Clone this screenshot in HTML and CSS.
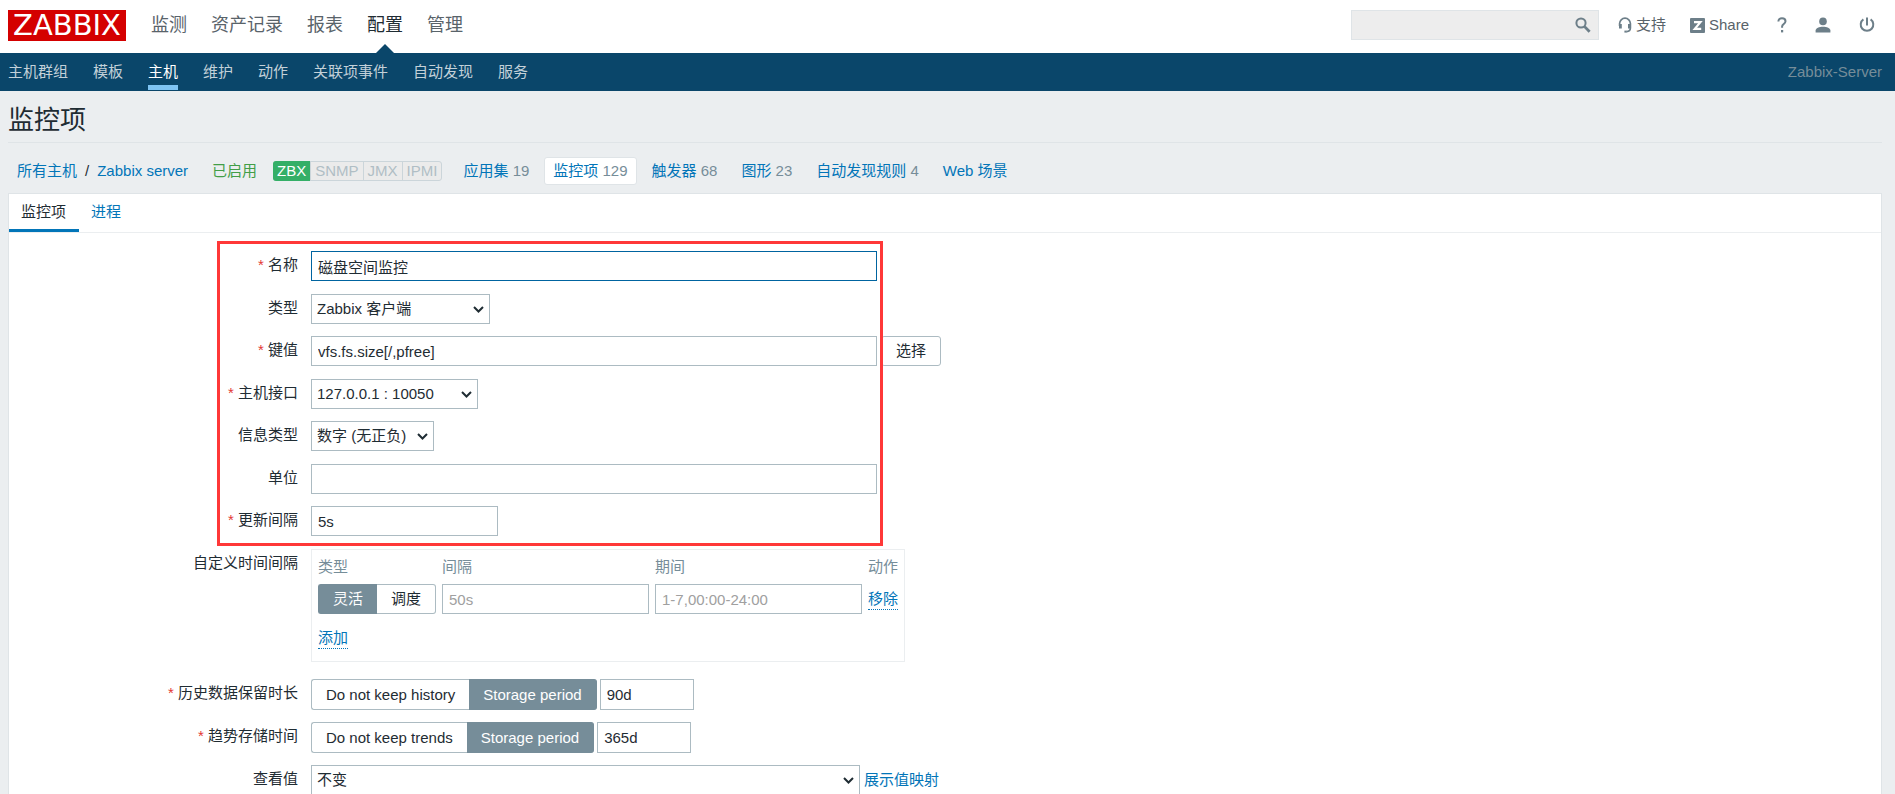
FILE: index.html
```html
<!DOCTYPE html>
<html lang="zh-CN">
<head>
<meta charset="utf-8">
<title>监控项</title>
<link rel="stylesheet" href="styles.css">
</head>
<body>
<header class="top">
  <a class="logo" href="#">ZABBIX</a>
  <nav class="main-nav">
    <a href="#">监测</a>
    <a href="#">资产记录</a>
    <a href="#">报表</a>
    <a href="#" class="current">配置</a>
    <a href="#">管理</a>
  </nav>
  <form class="search">
    <input type="text" aria-label="搜索">
    <button type="button" aria-label="搜索"><svg width="16" height="16" viewBox="0 0 16 16" fill="none" stroke="currentColor"><circle cx="6" cy="6" r="4.6" stroke-width="2"/><path d="M9.6 9.6 14.6 14.8" stroke-width="2.8"/></svg></button>
  </form>
  <a class="tool support" href="#"><svg width="14" height="16" viewBox="0 0 14 16" fill="none" stroke="currentColor"><path d="M1.6 9V6.6a5.4 5.4 0 0 1 10.8 0V11q0 3.4-3.8 3.6" stroke-width="1.7"/><path d="M2.4 7v4.4M11.4 7v4.4" stroke-width="2.8"/><path d="M6.4 14.6h2.4" stroke-width="2"/></svg>支持</a>
  <a class="tool share" href="#"><svg width="15" height="15" viewBox="0 0 15 15"><rect width="15" height="15" rx="1" fill="currentColor"/><path d="M4 4.2h6.4L4.8 10.9h6.4" fill="none" stroke="#fff" stroke-width="2.2"/></svg>Share</a>
  <a class="tool icon help" href="#" aria-label="帮助"><svg width="10" height="16" viewBox="0 0 10 16" fill="none" stroke="currentColor"><path d="M1.4 4.6C1.4 2.4 2.9 1.3 5 1.3s3.5 1.1 3.5 3c0 2.6-3.4 2.8-3.4 5.2v1.2" stroke-width="2"/><path d="M4 13h2.2v2.4H4z" fill="currentColor" stroke="none"/></svg></a>
  <a class="tool icon user" href="#" aria-label="用户"><svg width="16" height="16" viewBox="0 0 16 16" fill="currentColor"><circle cx="8" cy="4.4" r="3.8"/><path d="M.6 15.4v-1.8c0-2.5 3.6-3.8 7.4-3.8s7.4 1.3 7.4 3.8v1.8z"/></svg></a>
  <a class="tool icon power" href="#" aria-label="退出"><svg width="16" height="16" viewBox="0 0 16 16" fill="none" stroke="currentColor" stroke-width="2"><path d="M8 .6v8M4.4 2.4a6.3 6.3 0 1 0 7.2 0"/></svg></a>
</header>
<nav class="sub-nav">
  <a href="#">主机群组</a>
  <a href="#">模板</a>
  <a href="#" class="current">主机</a>
  <a href="#">维护</a>
  <a href="#">动作</a>
  <a href="#">关联项事件</a>
  <a href="#">自动发现</a>
  <a href="#">服务</a>
  <span class="server">Zabbix-Server</span>
</nav>
<main>
  <h1>监控项</h1>
  <div class="crumbs">
    <span class="path"><a href="#">所有主机</a><span>/</span><a href="#">Zabbix server</a></span>
    <span class="enabled">已启用</span>
    <span class="agents"><span class="on">ZBX</span><span>SNMP</span><span>JMX</span><span>IPMI</span></span>
    <div class="links">
      <span><a href="#">应用集</a> 19</span>
      <span class="selected"><a href="#">监控项</a> 129</span>
      <span><a href="#">触发器</a> 68</span>
      <span><a href="#">图形</a> 23</span>
      <span><a href="#">自动发现规则</a> 4</span>
      <span><a href="#">Web 场景</a></span>
    </div>
  </div>
  <section class="panel">
    <div class="tabs">
      <a href="#" class="current">监控项</a>
      <a href="#">进程</a>
    </div>
    <form class="item-form">
      <div class="highlight"></div>
      <div class="row">
        <label class="required" for="name">名称</label>
        <div class="field"><input class="wide focused" id="name" type="text" value="磁盘空间监控"></div>
      </div>
      <div class="row">
        <label for="type">类型</label>
        <div class="field"><select class="type" id="type"><option>Zabbix 客户端</option></select></div>
      </div>
      <div class="row">
        <label class="required" for="key">键值</label>
        <div class="field spaced"><input class="wide" id="key" type="text" value="vfs.fs.size[/,pfree]"><button class="btn" type="button">选择</button></div>
      </div>
      <div class="row">
        <label class="required" for="iface">主机接口</label>
        <div class="field"><select class="iface" id="iface"><option>127.0.0.1 : 10050</option></select></div>
      </div>
      <div class="row">
        <label for="info">信息类型</label>
        <div class="field"><select class="info" id="info"><option>数字 (无正负)</option></select></div>
      </div>
      <div class="row">
        <label for="units">单位</label>
        <div class="field"><input class="wide" id="units" type="text"></div>
      </div>
      <div class="row">
        <label class="required" for="delay">更新间隔</label>
        <div class="field"><input class="delay" id="delay" type="text" value="5s"></div>
      </div>
      <div class="row intervals-row">
        <label for="interval">自定义时间间隔</label>
        <div class="intervals">
          <table>
            <thead><tr><th>类型</th><th>间隔</th><th>期间</th><th>动作</th></tr></thead>
            <tbody>
              <tr>
                <td><div class="segments"><button type="button" class="on">灵活</button><button type="button">调度</button></div></td>
                <td><input class="cell" id="interval" type="text" placeholder="50s"></td>
                <td><input class="cell" type="text" placeholder="1-7,00:00-24:00" aria-label="期间"></td>
                <td><a class="dotted" href="#">移除</a></td>
              </tr>
              <tr><td colspan="4" class="add"><a class="dotted" href="#">添加</a></td></tr>
            </tbody>
          </table>
        </div>
      </div>
      <div class="row tall">
        <label class="required" for="history">历史数据保留时长</label>
        <div class="field"><div class="segments"><button type="button">Do not keep history</button><button type="button" class="on">Storage period</button></div><input class="period" id="history" type="text" value="90d"></div>
      </div>
      <div class="row tall">
        <label class="required" for="trends">趋势存储时间</label>
        <div class="field"><div class="segments"><button type="button">Do not keep trends</button><button type="button" class="on">Storage period</button></div><input class="period" id="trends" type="text" value="365d"></div>
      </div>
      <div class="row">
        <label for="valuemap">查看值</label>
        <div class="field spaced"><select class="valuemap" id="valuemap"><option>不变</option></select><a href="#">展示值映射</a></div>
      </div>
    </form>
  </section>
</main>
</body>
</html>
```

FILE: styles.css
```css
* {
  box-sizing: border-box;
}

body {
  margin: 0;
  height: 100vh;
  overflow: hidden;
  display: flex;
  flex-direction: column;
  background: #ebeef0;
  color: #1f2c33;
  font: 15px/20px "Liberation Sans", Arial, "Noto Sans CJK SC", sans-serif;
}

a {
  color: #0275b8;
  text-decoration: none;
}

input,
select,
button {
  margin: 0;
  font: inherit;
  color: inherit;
}

svg {
  display: block;
}

/* Header */
.top {
  flex: none;
  display: flex;
  align-items: center;
  height: 53px;
  padding: 0 20px 3px 8px;
  background: #fff;
}

.logo {
  width: 118px;
  height: 31px;
  background: #d40000;
  color: #fff;
  font: 29px/31px "DejaVu Sans", sans-serif;
  text-align: center;
}

.main-nav {
  display: flex;
  align-self: stretch;
  gap: 24px;
  margin-left: 25px;
  margin-right: auto;
}

.main-nav a {
  position: relative;
  padding-top: 13px;
  color: #59636a;
  font-size: 18px;
  line-height: 24px;
}

.main-nav .current {
  color: #1f2c33;
}

.main-nav .current::after {
  content: "";
  position: absolute;
  left: 50%;
  bottom: -3px;
  margin-left: -9px;
  border: 9px solid transparent;
  border-top: 0;
  border-bottom-color: #0a466a;
}

.search {
  display: flex;
  width: 248px;
  height: 30px;
  border: 1px solid #dfe4e7;
  background: #ededed;
}

.search input {
  flex: 1;
  min-width: 0;
  border: 0;
  padding: 0 6px;
  background: none;
}

.search button {
  border: 0;
  padding: 0 7px;
  background: none;
  color: #6d7f89;
}

.tool {
  display: flex;
  align-items: center;
  gap: 4px;
  color: #59636a;
}

.tool svg {
  color: #6d7f89;
}

.support {
  margin-left: 19px;
}

.share {
  margin-left: 24px;
}

.icon {
  margin-left: 28px;
}

.sub-nav {
  flex: none;
  display: flex;
  gap: 25px;
  height: 38px;
  padding: 0 13px 0 8px;
  background: #0a466a;
}

.sub-nav a {
  height: 37px;
  padding-top: 9px;
  border-bottom: 5px solid transparent;
  color: #c3d1d9;
}

.sub-nav .current {
  border-color: #7ec4f3;
  color: #fff;
}

.server {
  margin-left: auto;
  padding-top: 9px;
  color: #768d99;
}

/* Title and breadcrumbs */
main {
  flex: 1;
  min-height: 0;
  display: flex;
  flex-direction: column;
  padding: 0 13px 0 8px;
}

h1 {
  margin: 0;
  padding: 13px 0 6px;
  border-bottom: 1px solid #dfe4e7;
  font-size: 26px;
  font-weight: 400;
  line-height: 32px;
}

.crumbs {
  display: flex;
  align-items: center;
  padding: 14px 0 8px 9px;
}

.path {
  display: flex;
  gap: 8px;
}

.enabled {
  margin: 0 16px 0 24px;
  color: #429e47;
}

.agents {
  display: flex;
  margin-right: 12px;
  border: 1px solid #cbd5da;
  border-radius: 3px;
  background: #ebebeb;
  color: #b0bec5;
  line-height: 18px;
}

.agents span {
  padding: 0 4px;
  border-left: 1px solid #cbd5da;
}

.agents .on {
  margin: -1px 0 -1px -1px;
  padding: 1px 4px;
  border: 0;
  border-radius: 3px 0 0 3px;
  background: #34af67;
  color: #fff;
}

.links {
  display: flex;
  gap: 6px;
  color: #768d99;
}

.links > span {
  padding: 3px 8px;
  border: 1px solid transparent;
  border-radius: 3px;
}

.links .selected {
  border-color: #dfe4e7;
  background: #fff;
}

/* Panel */
.panel {
  flex: 1;
  min-height: 0;
  overflow: hidden;
  border: 1px solid #dfe4e7;
  border-bottom: 0;
  background: #fff;
}

.tabs {
  display: flex;
  border-bottom: 1px solid #ebeef0;
}

.tabs a {
  padding: 8px 13px 7px 12px;
  border-bottom: 3px solid transparent;
}

.tabs .current {
  border-color: #0275b8;
  color: #1f2c33;
}

.item-form {
  position: relative;
  padding-top: 18px;
}

.highlight {
  position: absolute;
  left: 208px;
  top: 8px;
  width: 666px;
  height: 305px;
  border: 3px solid #ff3838;
  pointer-events: none;
  z-index: 1;
}

.row {
  display: grid;
  grid-template-columns: 289px 1fr;
  column-gap: 13px;
  margin-bottom: 12px;
}

.row:nth-child(even) {
  margin-bottom: 13px;
}

.row > label {
  padding-top: 4px;
  text-align: right;
}

.required::before {
  content: "* ";
  color: #e33734;
}

.field {
  display: flex;
  align-items: center;
  gap: 3px;
}

.spaced {
  gap: 4px;
}

.item-form input,
.item-form select {
  height: 30px;
  border: 1px solid #acbbc2;
  border-radius: 0;
  background: #fff;
}

.item-form input {
  padding: 0 6px;
}

.item-form select {
  appearance: none;
  padding: 0 20px 0 5px;
  background: #fff url("data:image/svg+xml,%3Csvg xmlns='http://www.w3.org/2000/svg' width='11' height='7'%3E%3Cpath d='M1 1l4.5 4.5L10 1' fill='none' stroke='%231f2c33' stroke-width='2'/%3E%3C/svg%3E") no-repeat right 5px center;
}

.item-form .focused {
  border-color: #0064a0;
}

.item-form .wide {
  width: 566px;
}

.type {
  width: 179px;
}

.iface {
  width: 167px;
}

.info {
  width: 123px;
}

.delay {
  width: 187px;
}

.valuemap {
  width: 549px;
}

.item-form .cell {
  display: block;
  width: 207px;
}

.period {
  width: 94px;
}

.item-form .tall input,
.tall .segments {
  height: 31px;
}

input::placeholder {
  color: #a0a0a0;
}

.btn {
  height: 30px;
  padding: 0 14px;
  border: 1px solid #acbbc2;
  border-radius: 3px;
  background: #fff;
}

.segments {
  display: flex;
  height: 30px;
}

.segments button {
  padding: 0 14px;
  border: 1px solid #acbbc2;
  background: #fff;
}

.segments button:first-child {
  border-right: 0;
  border-radius: 3px 0 0 3px;
}

.segments button:last-child {
  border-left: 0;
  border-radius: 0 3px 3px 0;
}

.segments .on {
  border-color: #768d99;
  background: #768d99;
  color: #fff;
}

.intervals {
  justify-self: start;
  padding: 7px 6px 12px;
  border: 1px solid #ebeef0;
}

.item-form .intervals-row {
  margin-bottom: 17px;
}

.item-form .tall {
  margin-bottom: 12px;
}

.intervals table {
  border-collapse: collapse;
}

.intervals th {
  padding: 0 0 7px;
  color: #768d99;
  font-weight: 400;
  text-align: left;
}

.intervals td {
  padding: 0 6px 0 0;
}

.intervals td:last-child {
  padding-right: 0;
}

.intervals .add {
  padding-top: 14px;
}

.dotted {
  display: inline-block;
  border-bottom: 1px dotted #0275b8;
}
```
